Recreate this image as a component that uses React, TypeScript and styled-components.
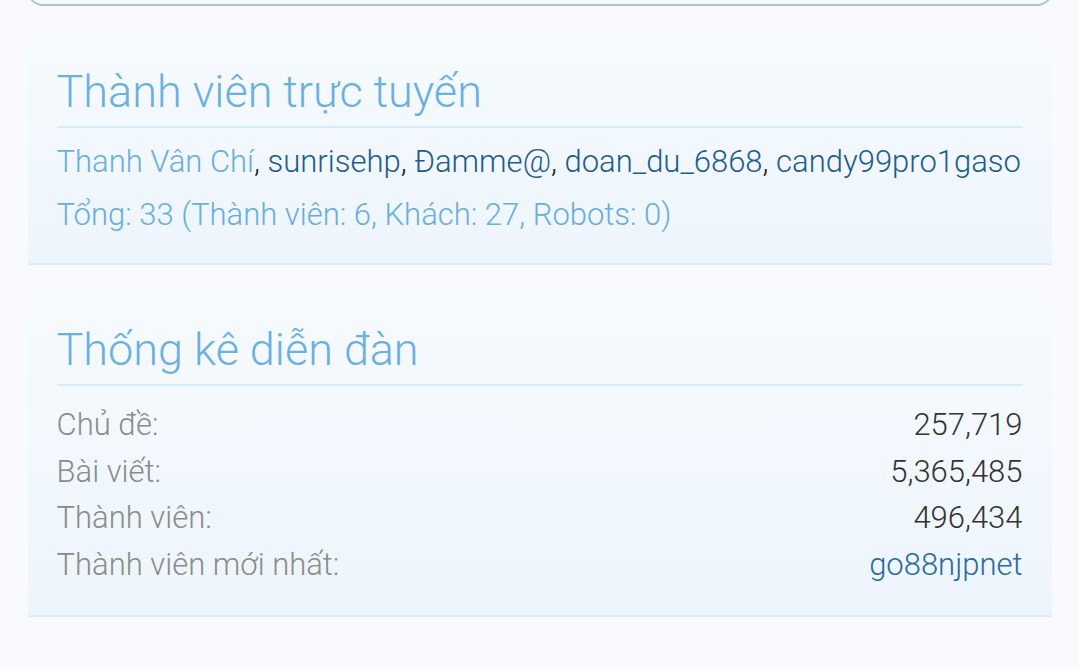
import React from "react";
import styled, { createGlobalStyle } from "styled-components";

const Global = createGlobalStyle`
  html, body { margin: 0; padding: 0; background: #f8fafd; }
  body { font-family: Roboto, "Noto Sans", sans-serif; }
`;

const Page = styled.div`
  width: 1079px;
  height: 669px;
  overflow: hidden;
  display: flex;
  flex-direction: column;
  align-items: center;
`;

const TopBox = styled.div`
  width: 1026px;
  height: 60px;
  margin-top: -54px;
  box-sizing: border-box;
  border: 2px solid #aac6d8;
  border-top: none;
  border-radius: 0 0 16px 16px;
  background: #f8fafd;
`;

const Block = styled.section<{ $mt: number }>`
  width: 1024px;
  box-sizing: border-box;
  margin-top: ${(p) => p.$mt}px;
  padding: 0 29px;
  background: linear-gradient(#f6fafd, #edf5fc);
  border-bottom: 2px solid #dcebf6;
`;

const Title = styled.h2`
  margin: 0;
  padding: 31px 0 8px;
  font-size: 45px;
  font-weight: 300;
  line-height: 52px;
  color: #6cb0dc;
  border-bottom: 2px solid #d8e9f6;
`;

const Line = styled.div`
  font-size: 31px;
  font-weight: 300;
  line-height: 53px;
  color: #222;
  white-space: nowrap;
`;

const Light = styled.span`
  color: #6aaedb;
`;

const Dark = styled.span`
  color: #1e5c8a;
`;

const Body = styled.div<{ $pt: number; $pb: number }>`
  padding: ${(p) => p.$pt}px 0 ${(p) => p.$pb}px;
`;

const Row = styled.div`
  display: flex;
  justify-content: space-between;
  font-size: 31px;
  font-weight: 300;
  line-height: 46.5px;
`;

const Label = styled.span`
  color: #8b8b8b;
`;

const Value = styled.span<{ $link?: boolean }>`
  color: ${(p) => (p.$link ? "#2a6a9c" : "#333")};
`;

const stats: { label: string; value: string; link?: boolean }[] = [
  { label: "Chủ đề:", value: "257,719" },
  { label: "Bài viết:", value: "5,365,485" },
  { label: "Thành viên:", value: "496,434" },
  { label: "Thành viên mới nhất:", value: "go88njpnet", link: true },
];

export default function App() {
  return (
    <Page>
      <Global />
      <TopBox />
      <Block $mt={29}>
        <Title>Thành viên trực tuyến</Title>
        <Body $pt={7} $pb={22}>
          <Line>
            <Light>Thanh Vân Chí</Light>, <Dark>sunrisehp</Dark>, <Dark>Đamme@</Dark>,{" "}
            <Dark>doan_du_6868</Dark>, <Dark>candy99pro1gaso</Dark>
          </Line>
          <Line>
            <Light>Tổng: 33 (Thành viên: 6, Khách: 27, Robots: 0)</Light>
          </Line>
        </Body>
      </Block>
      <Block $mt={28}>
        <Title>Thống kê diễn đàn</Title>
        <Body $pt={16} $pb={27}>
          {stats.map((s) => (
            <Row key={s.label}>
              <Label>{s.label}</Label>
              <Value $link={s.link}>{s.value}</Value>
            </Row>
          ))}
        </Body>
      </Block>
    </Page>
  );
}
